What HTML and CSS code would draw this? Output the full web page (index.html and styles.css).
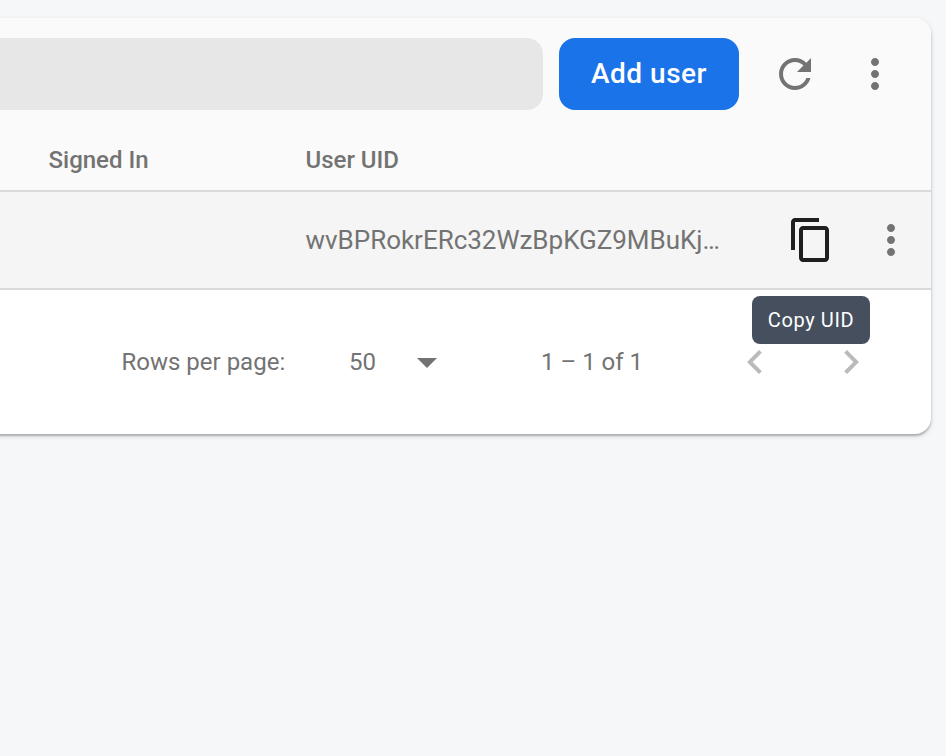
FILE: index.html
```html
<!DOCTYPE html>
<html lang="en">
<head>
<meta charset="utf-8">
<title>Users</title>
<link rel="stylesheet" href="styles.css">
</head>
<body>
<main class="card">
  <header class="toolbar">
    <div class="search"></div>
    <button class="add">Add user</button>
    <button class="icon-button refresh" aria-label="Refresh"><svg viewBox="0 0 24 24"><path d="M17.65 6.35C16.2 4.9 14.21 4 12 4c-4.42 0-7.99 3.58-7.99 8s3.57 8 7.99 8c3.73 0 6.84-2.55 7.73-6h-2.08c-.82 2.33-3.04 4-5.65 4-3.31 0-6-2.69-6-6s2.69-6 6-6c1.66 0 3.14.69 4.22 1.78L13 11h7V4l-2.35 2.35z"/></svg></button>
    <button class="icon-button more" aria-label="More"><svg viewBox="0 0 24 24"><path d="M12 8c1.1 0 2-.9 2-2s-.9-2-2-2-2 .9-2 2 .9 2 2 2zm0 2c-1.1 0-2 .9-2 2s.9 2 2 2 2-.9 2-2-.9-2-2-2zm0 6c-1.1 0-2 .9-2 2s.9 2 2 2 2-.9 2-2-.9-2-2-2z"/></svg></button>
  </header>
  <div class="row head">
    <span class="signed">Signed In</span>
    <span>User UID</span>
  </div>
  <div class="row data">
    <span></span>
    <span class="uid">wvBPRokrERc32WzBpKGZ9MBuKj…</span>
    <button class="icon-button copy" aria-label="Copy"><svg viewBox="0 0 24 24"><path d="M16 1H4c-1.1 0-2 .9-2 2v14h2V3h12V1zm3 4H8c-1.1 0-2 .9-2 2v14c0 1.1.9 2 2 2h11c1.1 0 2-.9 2-2V7c0-1.1-.9-2-2-2zm0 16H8V7h11v14z"/></svg><span class="tooltip">Copy UID</span></button>
    <button class="icon-button" aria-label="More"><svg viewBox="0 0 24 24"><path d="M12 8c1.1 0 2-.9 2-2s-.9-2-2-2-2 .9-2 2 .9 2 2 2zm0 2c-1.1 0-2 .9-2 2s.9 2 2 2 2-.9 2-2-.9-2-2-2zm0 6c-1.1 0-2 .9-2 2s.9 2 2 2 2-.9 2-2-.9-2-2-2z"/></svg></button>
  </div>
  <footer class="pager">
    <span class="rows">Rows per page:</span>
    <span class="size">50</span>
    <svg class="caret" viewBox="0 0 20 10"><path d="M0 0l10 10L20 0z"/></svg>
    <span class="range">1 – 1 of 1</span>
    <button class="icon-button prev" aria-label="Previous"><svg viewBox="0 0 24 24"><path d="M15.41 7.41L14 6l-6 6 6 6 1.41-1.41L10.83 12z"/></svg></button>
    <button class="icon-button next" aria-label="Next"><svg viewBox="0 0 24 24"><path d="M10 6L8.59 7.41 13.17 12l-4.58 4.59L10 18l6-6z"/></svg></button>
  </footer>
</main>
</body>
</html>
```
FILE: styles.css
```css
* { box-sizing: border-box; }
body {
  margin: 0;
  padding-top: 18px;
  min-height: 100vh;
  background: #f5f7f9;
  color: #737373;
  font-family: Roboto, "Liberation Sans", sans-serif;
}
button { border: 0; padding: 0; background: none; color: inherit; font: inherit; }
svg { display: block; fill: currentColor; }
.card {
  width: 947px;
  height: 416px;
  margin-left: -16px;
  padding-left: 16px;
  background: #fff;
  border-radius: 0 16px 16px 0;
  box-shadow: 0 2px 2px rgba(0, 0, 0, .2), 0 2px 5px rgba(0, 0, 0, .16);
}
.toolbar {
  display: flex;
  align-items: center;
  height: 112px;
  padding-right: 32px;
  background: #fafafa;
  border-radius: 0 16px 0 0;
}
.search { width: 543px; height: 72px; border-radius: 0 16px 16px 0; background: #e7e7e7; }
.add {
  width: 180px;
  height: 72px;
  margin-left: 16px;
  padding-bottom: 2px;
  border-radius: 16px;
  background: #1a73e8;
  color: #fff;
  font-size: 28px;
  font-weight: 500;
  letter-spacing: .5px;
}
.icon-button { position: relative; width: 48px; height: 48px; flex: none; }
.refresh { margin-left: 32px; }
.more { margin-left: 32px; }
.row {
  display: grid;
  grid-template-columns: 305.5px 481.5px 80px 48px;
  align-items: center;
  border-bottom: 2px solid #dadada;
}
.head { height: 62px; background: #fafafa; font-size: 24px; font-weight: 500; }
.signed { padding-left: 48.5px; }
.data { height: 98px; background: #f5f5f5; }
.uid { font-size: 26px; letter-spacing: -.02px; }
.copy { color: #1f1f1f; }
.tooltip {
  position: absolute;
  top: 80px;
  left: -35px;
  width: 118px;
  height: 48px;
  border-radius: 8px;
  background: #454f5e;
  color: #fff;
  font-size: 20px;
  line-height: 48px;
  letter-spacing: .6px;
  text-align: center;
}
.pager { display: flex; align-items: center; height: 144px; padding-left: 121.5px; font-size: 24px; }
.rows { width: 227.5px; }
.size { width: 68px; }
.caret { width: 20px; height: 10px; margin-top: 2px; }
.range { width: 190px; margin-left: 104px; }
.prev, .next { color: #bababa; }
.next { margin-left: 48px; }
```
